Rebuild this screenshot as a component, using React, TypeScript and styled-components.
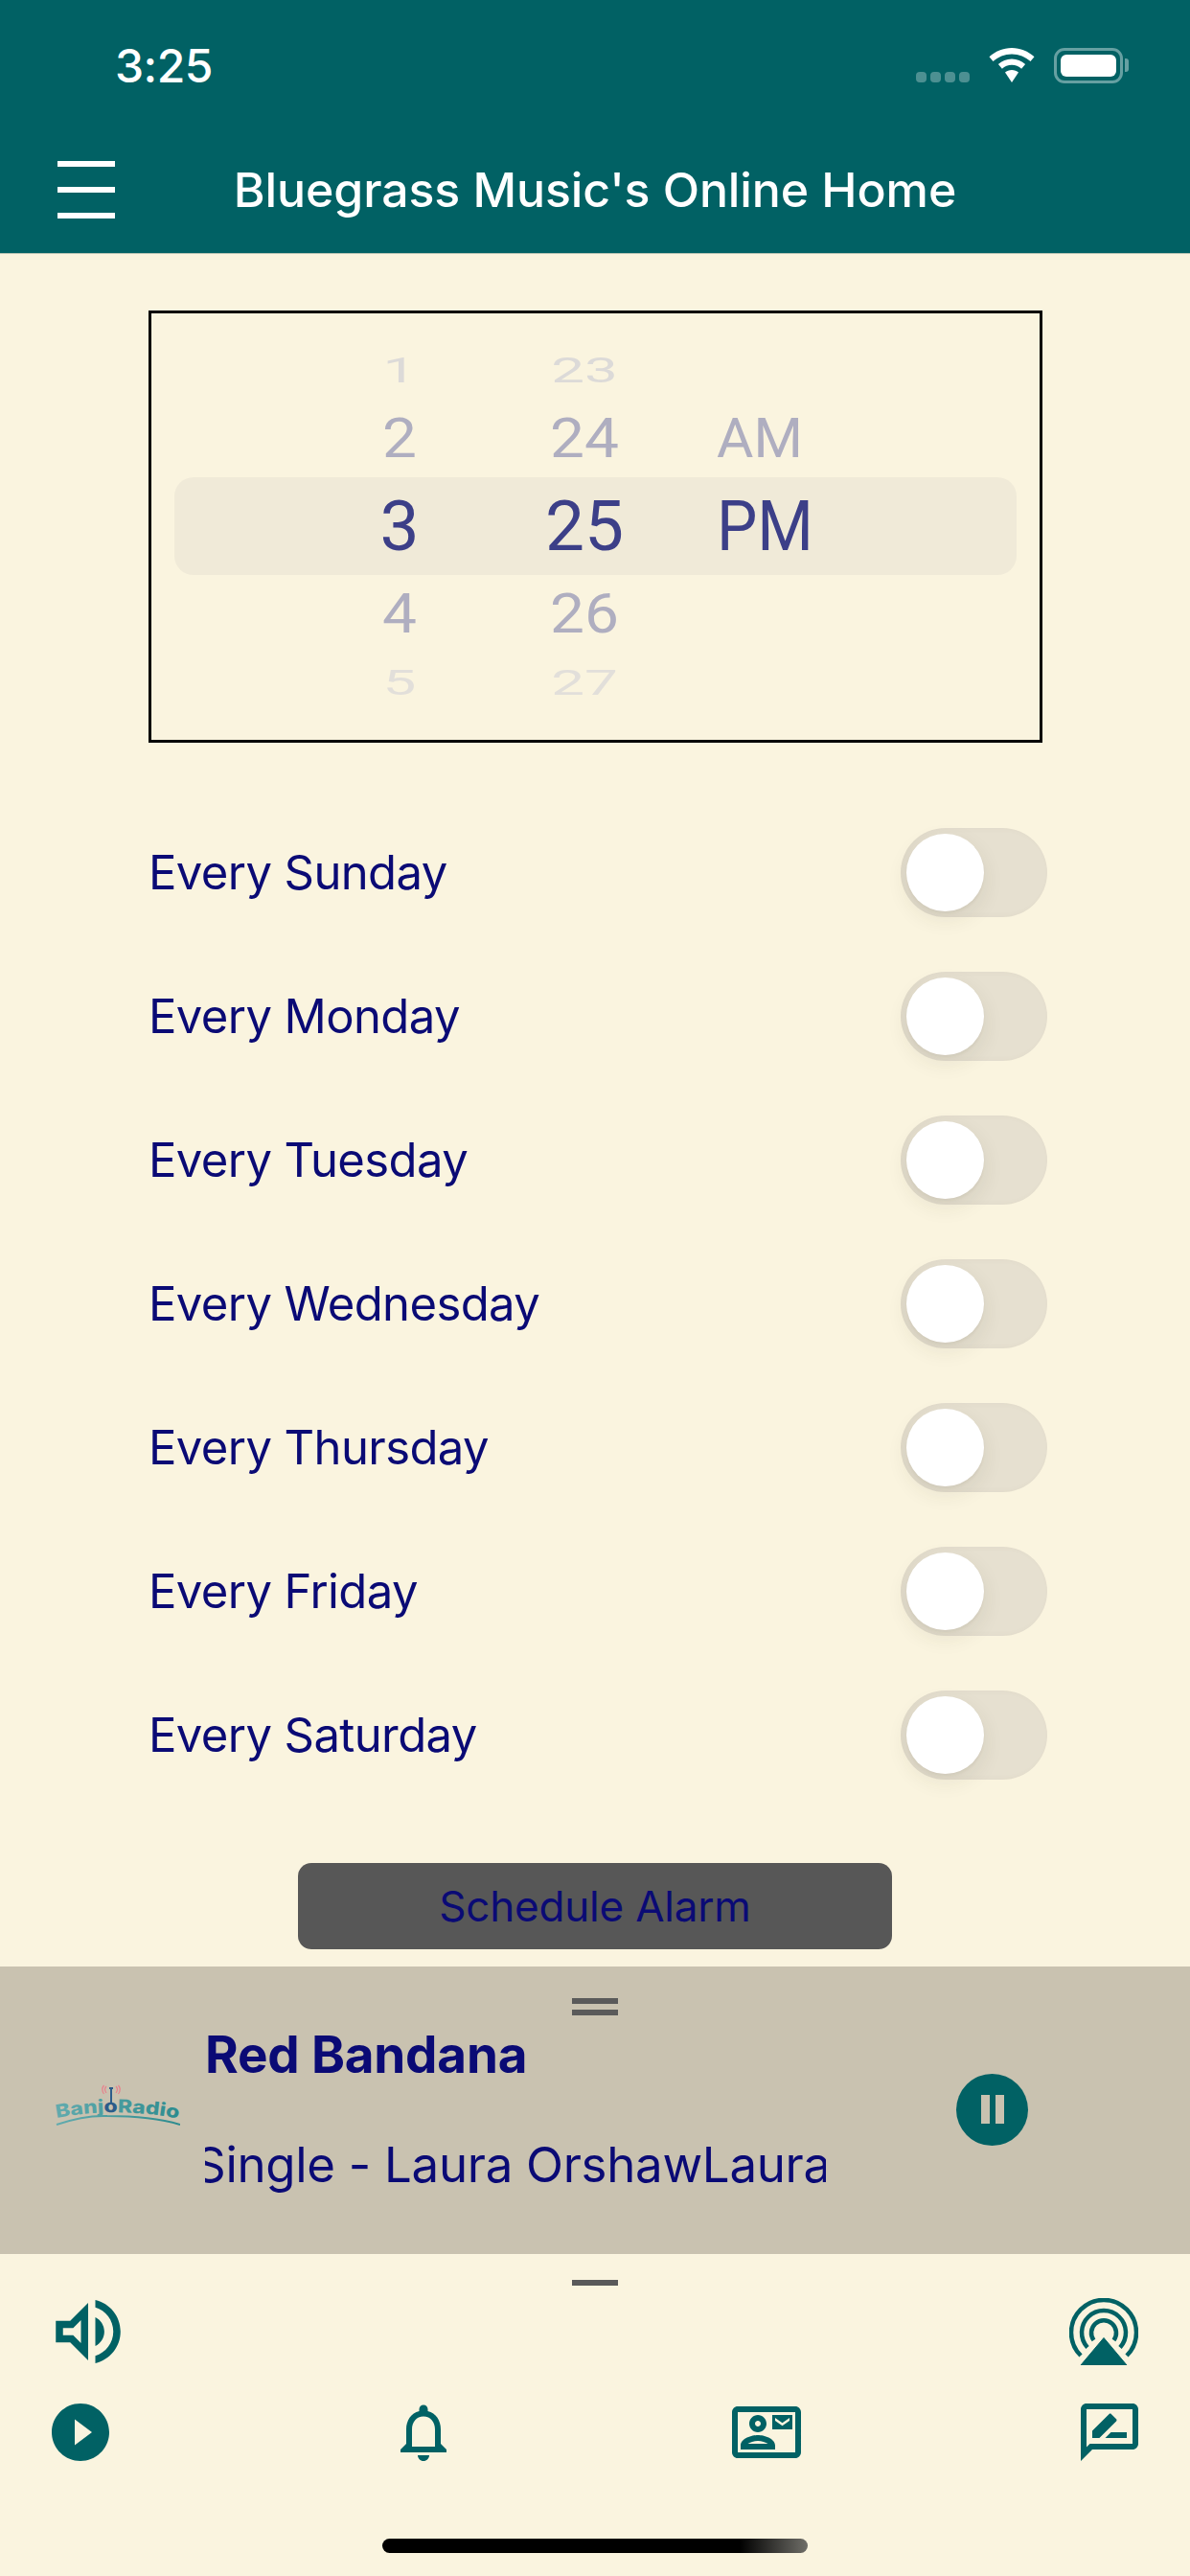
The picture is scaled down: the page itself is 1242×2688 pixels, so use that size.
/**
 * Alarm scheduler screen for the bluegrass radio app.
 * Header, time wheel, weekday switches, mini player and bottom icon bar.
 */
import { ReactElement } from 'react';
import styled, { createGlobalStyle } from 'styled-components';

const TEAL = '#016164';
const NAVY = '#0a0a75';
const CREAM = '#faf4df';
const SAND = '#c9c2b0';

const GlobalStyle = createGlobalStyle`
  html, body {
    margin: 0;
    padding: 0;
    background: ${CREAM};
  }
  * {
    box-sizing: border-box;
  }
`;

const Screen = styled.div`
  width: 1242px;
  height: 2688px;
  display: flex;
  flex-direction: column;
  overflow: hidden;
  background: ${CREAM};
  font-family: Inter, 'Liberation Sans', sans-serif;
`;

const Header = styled.header`
  height: 265px;
  background: ${TEAL};
  border-bottom: 1px solid #b9c4b4;
  color: #fff;
`;

const StatusBar = styled.div`
  height: 132px;
  padding: 4px 70px 0 120px;
  display: flex;
  align-items: center;
  justify-content: space-between;
`;

const Clock = styled.span`
  font-size: 48px;
  font-weight: 500;
  letter-spacing: -0.5px;
`;

const StatusIcons = styled.div`
  display: flex;
  align-items: center;
  gap: 20px;
`;

const SignalDots = styled.div`
  display: flex;
  gap: 4px;
  margin-top: 25px;
`;

const SignalDot = styled.i`
  width: 11px;
  height: 11px;
  border-radius: 4px;
  background: rgba(255, 255, 255, 0.3);
`;

const Battery = styled.div`
  position: relative;
  width: 72px;
  height: 37px;
  padding: 4px;
  border: 3px solid rgba(255, 255, 255, 0.4);
  border-radius: 11px;

  &::before {
    content: '';
    display: block;
    height: 100%;
    background: #fff;
    border-radius: 6px;
  }

  &::after {
    content: '';
    position: absolute;
    right: -9px;
    top: 8px;
    width: 4px;
    height: 14px;
    border-radius: 0 3px 3px 0;
    background: rgba(255, 255, 255, 0.4);
  }
`;

const NavBar = styled.div`
  height: 132px;
  display: grid;
  grid-template-columns: 1fr auto 1fr;
  align-items: center;
`;

const MenuButton = styled.div`
  width: 60px;
  height: 60px;
  margin-left: 60px;
  display: flex;
  flex-direction: column;
  justify-content: space-between;

  span {
    height: 6px;
    background: #fff;
  }
`;

const Title = styled.h1`
  margin: 0;
  font-size: 50px;
  font-weight: 500;
  letter-spacing: -0.1px;
`;

const Content = styled.main`
  height: 1787px;
  padding: 59px 0 0 155px;
`;

const PickerBox = styled.section`
  position: relative;
  width: 933px;
  height: 451px;
  padding: 23px 0 0 199px;
  border: 3px solid #000;
  display: flex;
  gap: 73px;
`;

const PickerBand = styled.div`
  position: absolute;
  left: 24px;
  right: 24px;
  top: 171px;
  height: 102px;
  border-radius: 20px;
  background: #f0ead8;
`;

const WheelColumn = styled.div<{ $meridiem?: boolean }>`
  position: relative;
  width: 120px;
  display: flex;
  flex-direction: column;
  font-family: Roboto, 'Liberation Sans', sans-serif;
  text-align: ${(p) => (p.$meridiem ? 'left' : 'center')};
  padding-left: ${(p) => (p.$meridiem ? '5px' : '0')};
  transform: ${(p) => (p.$meridiem ? 'scaleX(0.92)' : 'none')};
  transform-origin: 5px 0;
`;

const wheelRows = {
  far: { height: 72, size: 62, scale: 0.61, color: '#dcdad8' },
  near: { height: 72, size: 64, scale: 0.9, color: '#afaec0' },
  active: { height: 110, size: 73, scale: 1, color: '#3c3f88' },
  nearLow: { height: 74, size: 64, scale: 0.9, color: '#afaec0' },
  farLow: { height: 68, size: 62, scale: 0.61, color: '#e2dfda' },
};

type WheelKind = keyof typeof wheelRows;

const WheelRow = styled.div<{ $kind: WheelKind }>`
  height: ${(p) => wheelRows[p.$kind].height}px;
  line-height: ${(p) => wheelRows[p.$kind].height}px;
  font-size: ${(p) => wheelRows[p.$kind].size}px;
  color: ${(p) => wheelRows[p.$kind].color};
  transform: scaleY(${(p) => wheelRows[p.$kind].scale});
  white-space: nowrap;
`;

const DayList = styled.div`
  width: 938px;
  margin-top: 60px;
`;

const DayRow = styled.div`
  height: 150px;
  display: flex;
  align-items: center;
  justify-content: space-between;
`;

const DayLabel = styled.span`
  color: ${NAVY};
  font-size: 49px;
  letter-spacing: -0.6px;
`;

const Toggle = styled.div`
  width: 153px;
  height: 93px;
  padding: 6px;
  border-radius: 47px;
  background: #e6e0d0;
  box-shadow: inset 3px 0 6px rgba(120, 110, 90, 0.06);
`;

const ToggleKnob = styled.div`
  width: 81px;
  height: 81px;
  border-radius: 50%;
  background: #fff;
  box-shadow: 0 8px 22px rgba(60, 50, 30, 0.09), 0 2px 3px rgba(60, 50, 30, 0.06);
`;

const ScheduleButton = styled.button`
  display: block;
  width: 620px;
  height: 90px;
  margin: 59px 0 0 156px;
  padding: 0;
  border: 0;
  border-radius: 14px;
  background: #575757;
  color: ${NAVY};
  font-family: inherit;
  font-size: 44px;
  letter-spacing: -0.2px;
`;

const Player = styled.section`
  height: 300px;
  padding-top: 33px;
  background: ${SAND};
`;

const GripDouble = styled.div`
  width: 48px;
  height: 18px;
  margin: 0 auto;
  border-top: 6px solid #5a5a5a;
  border-bottom: 6px solid #5a5a5a;
`;

const PlayerRow = styled.div`
  height: 196px;
  padding-left: 58px;
  display: flex;
  align-items: center;
`;

const LogoMark = styled.svg`
  width: 130px;
  height: 44px;
  margin-bottom: 10px;
  flex: none;
`;

const TrackInfo = styled.div`
  width: 648px;
  margin-left: 26px;
  display: flex;
  flex-direction: column;
  gap: 55px;
  color: ${NAVY};
`;

const TrackTitle = styled.div`
  height: 60px;
  line-height: 60px;
  font-size: 53px;
  font-weight: 700;
  letter-spacing: -0.2px;
`;

const TrackMarquee = styled.div`
  height: 60px;
  line-height: 60px;
  font-size: 51px;
  overflow: hidden;
  white-space: nowrap;
  letter-spacing: -0.3px;

  span {
    display: inline-block;
    margin-left: -11px;
  }
`;

const PauseButton = styled.div`
  width: 75px;
  height: 75px;
  margin-left: 136px;
  border-radius: 50%;
  background: ${TEAL};
  display: flex;
  align-items: center;
  justify-content: center;
  gap: 6px;

  i {
    width: 9px;
    height: 30px;
    background: ${SAND};
  }
`;

const Footer = styled.footer`
  flex: 1;
  display: flex;
  flex-direction: column;
  padding-top: 27px;
`;

const GripSingle = styled.div`
  width: 48px;
  height: 6px;
  margin: 0 auto;
  background: #5a5a5a;
`;

const SoundRow = styled.div`
  height: 90px;
  margin-top: 3px;
  padding: 0 54px 0 47px;
  display: flex;
  align-items: center;
  justify-content: space-between;
`;

const TabRow = styled.nav`
  margin-top: 24px;
  padding: 0 48px;
  display: flex;
  justify-content: space-between;
`;

const Glyph = styled.svg<{ $size: number }>`
  width: ${(p) => p.$size}px;
  height: ${(p) => p.$size}px;
  fill: ${TEAL};
  display: block;
`;

const AirplayMark = styled.svg`
  width: 72px;
  height: 70px;
  display: block;

  path.arc {
    fill: none;
    stroke: ${TEAL};
    stroke-width: 4.5px;
  }
`;

const HomeIndicator = styled.div`
  width: 444px;
  height: 15px;
  margin: 75px auto 0;
  border-radius: 8px;
  background: linear-gradient(90deg, #000 0, #000 84%, #6f6e68 100%);
`;

const DAYS = ['Sunday', 'Monday', 'Tuesday', 'Wednesday', 'Thursday', 'Friday', 'Saturday'];

const WHEEL_KINDS: WheelKind[] = ['far', 'near', 'active', 'nearLow', 'farLow'];
const HOURS = ['1', '2', '3', '4', '5'];
const MINUTES = ['23', '24', '25', '26', '27'];
const MERIDIEM = ['\u00a0', 'AM', 'PM', '\u00a0', '\u00a0'];

function Wheel({ items, meridiem }: { items: string[]; meridiem?: boolean }): ReactElement {
  return (
    <WheelColumn $meridiem={meridiem}>
      {items.map((item, i) => (
        <WheelRow key={i} $kind={WHEEL_KINDS[i]}>
          {item}
        </WheelRow>
      ))}
    </WheelColumn>
  );
}

function Logo(): ReactElement {
  return (
    <LogoMark viewBox="0 0 130 44">
      <defs>
        <linearGradient id="logoTeal" x1="0" x2="1" y1="0" y2="0">
          <stop offset="0" stopColor="#62abae" />
          <stop offset="1" stopColor="#2c8b8e" />
        </linearGradient>
        <path id="logoCurve" d="M1 36 Q65 24 129 37" />
      </defs>
      <g fill="none" stroke="#e8808c" strokeWidth="1.2">
        <path d="M53 3 Q50 6 53 10" />
        <path d="M63 3 Q66 6 63 10" />
        <path d="M50.500 2 Q47 6 50.500 11" />
        <path d="M65.500 2 Q69 6 65.500 11" />
      </g>
      <rect x="56" y="4" width="4" height="2" fill="#2c5c8a" />
      <rect x="57" y="4" width="2" height="16" fill="#2c5c8a" />
      <text fontFamily="Inter, sans-serif" fontWeight="800" fontSize="19" fill="url(#logoTeal)">
        <textPath href="#logoCurve" textLength="128" lengthAdjust="spacingAndGlyphs">
          Banj<tspan fill="#2c5c8a">o</tspan>Radio
        </textPath>
      </text>
      <path d="M1 43 Q30 33 54 34 Q100 34 130 43" fill="none" stroke="url(#logoTeal)" strokeWidth="2" />
    </LogoMark>
  );
}

export default function App(): ReactElement {
  return (
    <Screen>
      <GlobalStyle />
      <Header>
        <StatusBar>
          <Clock>3:25</Clock>
          <StatusIcons>
            <SignalDots>
              <SignalDot />
              <SignalDot />
              <SignalDot />
              <SignalDot />
            </SignalDots>
            <svg width="48" height="36" viewBox="0 0 48 36" fill="#fff">
              <path d="M24 0C15 0 6.800 3.600 0.500 9.300L4.500 14C9.600 9.300 16.500 6.400 24 6.400S38.400 9.300 43.500 14L47.500 9.300C41.200 3.600 33 0 24 0Z" />
              <path d="M24 11.500C18.600 11.500 13.700 13.600 9.900 17L13.900 21.700C16.600 19.300 20.100 17.800 24 17.800S31.400 19.300 34.100 21.700L38.100 17C34.300 13.600 29.400 11.500 24 11.500Z" />
              <path d="M24 23C21.300 23 18.900 24 17 25.600L24 36L31 25.600C29.100 24 26.700 23 24 23Z" />
            </svg>
            <Battery />
          </StatusIcons>
        </StatusBar>
        <NavBar>
          <MenuButton>
            <span />
            <span />
            <span />
          </MenuButton>
          <Title>Bluegrass Music's Online Home</Title>
        </NavBar>
      </Header>

      <Content>
        <PickerBox>
          <PickerBand />
          <Wheel items={HOURS} />
          <Wheel items={MINUTES} />
          <Wheel items={MERIDIEM} meridiem />
        </PickerBox>

        <DayList>
          {DAYS.map((day) => (
            <DayRow key={day}>
              <DayLabel>Every {day}</DayLabel>
              <Toggle>
                <ToggleKnob />
              </Toggle>
            </DayRow>
          ))}
        </DayList>

        <ScheduleButton>Schedule Alarm</ScheduleButton>
      </Content>

      <Player>
        <GripDouble />
        <PlayerRow>
          <Logo />
          <TrackInfo>
            <TrackTitle>Red Bandana</TrackTitle>
            <TrackMarquee>
              <span>Single - Laura OrshawLaura Orshaw</span>
            </TrackMarquee>
          </TrackInfo>
          <PauseButton>
            <i />
            <i />
          </PauseButton>
        </PlayerRow>
      </Player>

      <Footer>
        <GripSingle />
        <SoundRow>
          <Glyph $size={90} viewBox="0 0 24 24">
            <path d="M3 9v6h4l5 5V4L7 9H3zm7-.17v6.34L7.83 13H5v-2h2.83L10 8.83zM16.500 12c0-1.770-1.020-3.290-2.500-4.030v8.050c1.480-.73 2.500-2.250 2.500-4.020zM14 3.230v2.060c2.890.86 5 3.540 5 6.710s-2.110 5.850-5 6.710v2.060c4.010-.91 7-4.490 7-8.770 0-4.280-2.990-7.860-7-8.770z" />
          </Glyph>
          <AirplayMark viewBox="0 0 72 70">
            <path className="arc" d="M12 60 A34 34 0 1 1 60 60" />
            <path className="arc" d="M19 51.500 A23 23 0 1 1 53 51.500" />
            <path className="arc" d="M25.500 44 A13 13 0 1 1 46.500 44" />
            <path d="M36 41.500 L60 70 H12 Z" fill={TEAL} stroke={TEAL} strokeWidth="1" strokeLinejoin="round" />
          </AirplayMark>
        </SoundRow>
        <TabRow>
          <Glyph $size={72} viewBox="0 0 24 24">
            <path d="M12 2C6.480 2 2 6.480 2 12s4.480 10 10 10 10-4.480 10-10S17.520 2 12 2zm-2 14.500v-9l6 4.500-6 4.500z" />
          </Glyph>
          <Glyph $size={72} viewBox="0 0 24 24">
            <path d="M12 22c1.100 0 2-.9 2-2h-4c0 1.100.9 2 2 2zm6-6v-5c0-3.070-1.630-5.640-4.500-6.320V4c0-.83-.67-1.500-1.500-1.500s-1.500.67-1.500 1.500v.68C7.640 5.360 6 7.920 6 11v5l-2 2v1h16v-1l-2-2zm-2 1H8v-6c0-2.480 1.510-4.500 4-4.500s4 2.020 4 4.500v6z" />
          </Glyph>
          <Glyph $size={72} viewBox="0 0 24 24">
            <path d="M22 3H2C.9 3 0 3.900 0 5v14c0 1.100.9 2 2 2h20c1.100 0 1.990-.9 1.990-2L24 5c0-1.100-.9-2-2-2zm0 16H2V5h20v14zM21 6h-7v5h7V6zm-1 2l-2.500 1.750L15 8V7l2.500 1.750L20 7v1zM9 12c1.650 0 3-1.350 3-3s-1.350-3-3-3-3 1.350-3 3 1.350 3 3 3zm0-4c.55 0 1 .45 1 1s-.45 1-1 1-1-.45-1-1 .45-1 1-1zm6 8.590c0-2.500-3.970-3.580-6-3.580s-6 1.080-6 3.580V18h12v-1.410zM5.480 16c.74-.5 2.220-1 3.520-1s2.770.49 3.520 1H5.480z" />
          </Glyph>
          <Glyph $size={72} viewBox="0 0 24 24">
            <path d="M20 2H4c-1.100 0-2 .9-2 2v18l4-4h14c1.100 0 2-.9 2-2V4c0-1.100-.9-2-2-2zm0 14H5.170L4 17.170V4h16v12z" />
            <path d="M10.500 14H18v-2h-5.500zM6 14h2.470l5.890-5.870c.2-.2.2-.51 0-.71l-1.770-1.770c-.2-.2-.51-.2-.71 0L6 11.530z" />
          </Glyph>
        </TabRow>
        <HomeIndicator />
      </Footer>
    </Screen>
  );
}
